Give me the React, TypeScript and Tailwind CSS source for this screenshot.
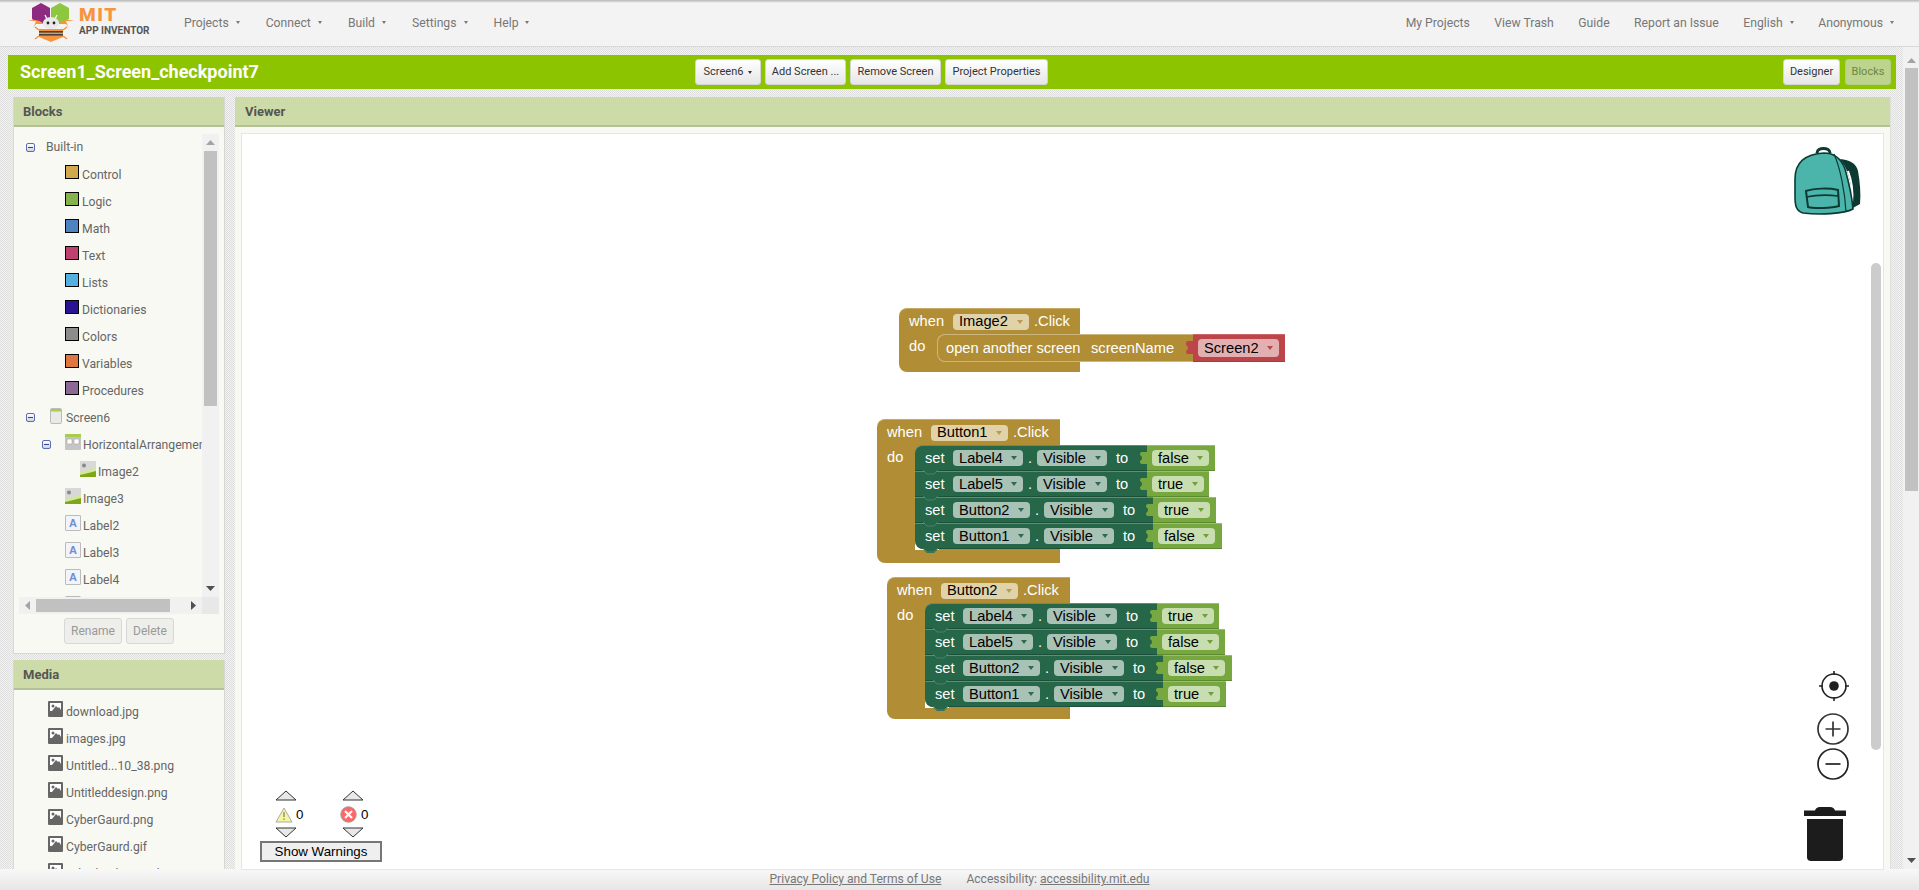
import React from "react";

const roboto = "font-['Roboto',sans-serif]";
const arial = "font-['Liberation_Sans',Arial,sans-serif]";

function Caret({ className = "border-t-[#777]" }: { className?: string }) {
  return <span className={`inline-block w-0 h-0 border-x-[2.5px] border-x-transparent border-t-[3px] ${className}`} />;
}

function NavItem({ label, caret }: { label: string; caret?: boolean }) {
  return (
    <div className="flex items-center text-[12.2px] text-[#777]">
      <span>{label}</span>
      {caret && <span className="ml-[7px] flex"><Caret /></span>}
    </div>
  );
}

function Logo() {
  return (
    <div className="flex items-start w-[150px] h-[46px] ml-[28px] shrink-0">
      <svg width="48" height="40" viewBox="0 0 48 40" className="mt-[2px] shrink-0">
        <polygon points="13,1 22,6 22,17 13,22 4,17 4,6" fill="#8e2a7f" />
        <polygon points="32,1 41,6 41,17 32,22 23,17 23,6" fill="#8dc63f" />
        <path d="M0 19 C6 17 12 18 16 22 L8 22 Q6 24 5 27 L8 19Z" fill="#f7943e" />
        <path d="M46 19 C40 17 34 18 30 22 L38 22 Q40 24 41 27 L38 19Z" fill="#f7943e" />
        <path d="M17 13 L19 17 M29 13 L27 17" stroke="#fff" strokeWidth="1.3" />
        <ellipse cx="23" cy="21" rx="8" ry="6" fill="#e9e9e9" />
        <circle cx="20" cy="21" r="1.4" fill="#222" />
        <circle cx="26" cy="21" r="1.4" fill="#222" />
        <polygon points="23,40 11,35 11,27 35,27 35,35" fill="#f7943e" />
        <rect x="11" y="29" width="24" height="1.6" fill="#444" />
        <rect x="11" y="32" width="24" height="1.6" fill="#444" />
        <path d="M11 28 L7 25 M35 28 L39 25 M11 34 L7 37 M35 34 L39 37" stroke="#f7943e" strokeWidth="1.4" />
      </svg>
      <div className="ml-[3px] flex flex-col">
        <span className="mt-[5px] h-[20px] text-[19px] leading-[20px] font-black tracking-[1.6px] text-[#f7943e]">MIT</span>
        <span className="text-[10px] leading-[12px] font-bold text-[#555] whitespace-nowrap">APP INVENTOR</span>
      </div>
    </div>
  );
}

function Header() {
  return (
    <header className={`h-[47px] shrink-0 bg-[#f3f3f3] border-b border-[#d8d8d8] flex items-center ${roboto} relative`}>
      <div className="absolute top-0 inset-x-0 h-[3px] bg-gradient-to-b from-[#b5b5b5] to-[#f3f3f3]" />
      <Logo />
      <div className="flex items-center ml-[6px] gap-[26px]">
        <NavItem label="Projects" caret />
        <NavItem label="Connect" caret />
        <NavItem label="Build" caret />
        <NavItem label="Settings" caret />
        <NavItem label="Help" caret />
      </div>
      <div className="ml-auto flex items-center gap-[24.5px] pr-[25px]">
        <NavItem label="My Projects" />
        <NavItem label="View Trash" />
        <NavItem label="Guide" />
        <NavItem label="Report an Issue" />
        <NavItem label="English" caret />
        <NavItem label="Anonymous" caret />
      </div>
    </header>
  );
}

function ToolButton({ children, className = "" }: { children: React.ReactNode; className?: string }) {
  return (
    <div className={`h-[26px] flex items-center justify-center rounded-[3px] bg-gradient-to-b from-white to-[#e6e6e6] border border-[#d4d4d4] text-[11px] text-[#333] ${className}`}>
      {children}
    </div>
  );
}

function GreenBar() {
  return (
    <div className={`h-[34px] ml-px shrink-0 bg-[#8dc400] flex items-center pl-[12px] pr-[5px] ${roboto}`}>
      <div className="w-[675px] -mt-px text-[18px] font-bold text-white">Screen1_Screen_checkpoint7</div>
      <div className="flex gap-[4px]">
        <ToolButton className="w-[66px] gap-[5px]">Screen6 <Caret className="border-t-[#333]" /></ToolButton>
        <ToolButton className="w-[81px]">Add Screen ...</ToolButton>
        <ToolButton className="w-[91px]">Remove Screen</ToolButton>
        <ToolButton className="w-[103px]">Project Properties</ToolButton>
      </div>
      <div className="ml-auto flex gap-[5px]">
        <ToolButton className="w-[57px]">Designer</ToolButton>
        <div className="h-[26px] w-[46px] flex items-center justify-center rounded-[3px] bg-[#bdd48e] border border-[#b4cc85] text-[11px] text-[#6c8740]">Blocks</div>
      </div>
    </div>
  );
}

function PanelHeader({ title, pad = "px-[10px]" }: { title: string; pad?: string }) {
  return (
    <div className={`h-[30px] shrink-0 bg-[#cddba8] border-b-2 border-[#b4c096] flex items-center pt-[2px] text-[13px] font-bold text-[#555] ${pad}`}>
      {title}
    </div>
  );
}

function Toggle() {
  return (
    <span className="w-[9px] h-[9px] shrink-0 rounded-[2px] border border-[#5b6eb0] bg-gradient-to-b from-white to-[#cfd3de] flex items-center justify-center">
      <span className="w-[5px] h-px bg-[#33408a]" />
    </span>
  );
}

function Swatch({ className }: { className: string }) {
  return <span className={`w-[14px] h-[14px] -mt-[6px] shrink-0 border border-black ${className}`} />;
}

function FormIcon() {
  return (
    <svg width="12" height="16" viewBox="0 0 12 16" className="-mt-[4px] shrink-0">
      <rect x="0.5" y="0.5" width="11" height="15" rx="1" fill="#e9e9e9" stroke="#bbb" />
      <rect x="1" y="1" width="10" height="2.5" fill="#a9cc4e" />
    </svg>
  );
}

function ArrangeIcon() {
  return (
    <svg width="16" height="16" viewBox="0 0 16 16" className="-mt-[5px] shrink-0">
      <rect width="16" height="16" rx="1" fill="#c5c5c5" />
      <rect width="16" height="3" fill="#a9cc4e" />
      <rect x="2" y="5" width="5" height="5" rx="1" fill="#fff" stroke="#999" strokeWidth="0.5" />
      <rect x="9" y="5" width="5" height="5" rx="1" fill="#fff" stroke="#999" strokeWidth="0.5" />
    </svg>
  );
}

function ImageIcon() {
  return (
    <svg width="16" height="16" viewBox="0 0 16 16" className="-mt-[5px] shrink-0">
      <rect width="16" height="16" fill="#d8d8d8" />
      <circle cx="4" cy="4.5" r="2" fill="#888" />
      <path d="M0 16 V11 C5 10 10 8 16 6 V16Z" fill="#d4e6a0" />
      <path d="M0 16 V14 C6 12.5 11 11.5 16 10 V16Z" fill="#7fa616" />
    </svg>
  );
}

function LabelIcon() {
  return (
    <span className={`w-[16px] h-[16px] -mt-[5px] shrink-0 rounded-[1px] border border-[#bbb] bg-[#f2f4fa] flex items-center justify-center text-[11px] leading-none font-bold text-[#6f8fd0] ${arial}`}>
      A
    </span>
  );
}

function TreeRow({ pad, toggle, icon, label, gap = "ml-[2px] relative top-px" }: { pad: string; toggle?: boolean; icon?: React.ReactNode; label?: string; gap?: string }) {
  return (
    <div className={`h-[27px] flex items-center whitespace-nowrap ${pad}`}>
      {toggle && <Toggle />}
      {icon}
      {label && <span className={`text-[12.2px] text-[#666] ${gap}`}>{label}</span>}
    </div>
  );
}

function ScrollArrow({ dir, className = "" }: { dir: "up" | "down" | "left" | "right"; className?: string }) {
  const paths = { up: "M0 5 L4.5 0 L9 5Z", down: "M0 0 L4.5 5 L9 0Z", left: "M5 0 L0 4.5 L5 9Z", right: "M0 0 L5 4.5 L0 9Z" };
  const horizontal = dir === "left" || dir === "right";
  return (
    <svg width={horizontal ? 5 : 9} height={horizontal ? 9 : 5} viewBox={horizontal ? "0 0 5 9" : "0 0 9 5"} className={className}>
      <path d={paths[dir]} fill={dir === "up" || dir === "left" ? "#a3a3a3" : "#505050"} />
    </svg>
  );
}

function BlocksPanel() {
  const swatchGap = "ml-[3px] relative top-px";
  return (
    <section className="h-[557px] shrink-0 bg-[#f8f9f3] border-x border-b border-[#d8d8d2] flex flex-col">
      <PanelHeader title="Blocks" pad="px-[9px]" />
      <div className="mx-[5px] mt-[7px] h-[480px] flex flex-col">
        <div className="h-[463px] flex">
          <div className="w-[183px] overflow-hidden">
            <TreeRow pad="pl-[7px]" toggle label="Built-in" gap="ml-[11px]" />
            <TreeRow pad="pl-[46px]" icon={<Swatch className="bg-[#cfa94b]" />} label="Control" gap={swatchGap} />
            <TreeRow pad="pl-[46px]" icon={<Swatch className="bg-[#86b14c]" />} label="Logic" gap={swatchGap} />
            <TreeRow pad="pl-[46px]" icon={<Swatch className="bg-[#4f83c0]" />} label="Math" gap={swatchGap} />
            <TreeRow pad="pl-[46px]" icon={<Swatch className="bg-[#c0406f]" />} label="Text" gap={swatchGap} />
            <TreeRow pad="pl-[46px]" icon={<Swatch className="bg-[#52b2dd]" />} label="Lists" gap={swatchGap} />
            <TreeRow pad="pl-[46px]" icon={<Swatch className="bg-[#2a1294]" />} label="Dictionaries" gap={swatchGap} />
            <TreeRow pad="pl-[46px]" icon={<Swatch className="bg-[#8c8c8c]" />} label="Colors" gap={swatchGap} />
            <TreeRow pad="pl-[46px]" icon={<Swatch className="bg-[#dd7640]" />} label="Variables" gap={swatchGap} />
            <TreeRow pad="pl-[46px]" icon={<Swatch className="bg-[#8b6896]" />} label="Procedures" gap={swatchGap} />
            <TreeRow pad="pl-[7px]" toggle icon={<span className="ml-[15px] flex"><FormIcon /></span>} label="Screen6" gap="ml-[4px] relative top-px" />
            <TreeRow pad="pl-[23px]" toggle icon={<span className="ml-[14px] flex"><ArrangeIcon /></span>} label="HorizontalArrangement1" />
            <TreeRow pad="pl-[61px]" icon={<ImageIcon />} label="Image2" />
            <TreeRow pad="pl-[46px]" icon={<ImageIcon />} label="Image3" />
            <TreeRow pad="pl-[46px]" icon={<LabelIcon />} label="Label2" />
            <TreeRow pad="pl-[46px]" icon={<LabelIcon />} label="Label3" />
            <TreeRow pad="pl-[46px]" icon={<LabelIcon />} label="Label4" />
            <TreeRow pad="pl-[46px]" icon={<LabelIcon />} />
          </div>
          <div className="w-[17px] bg-[#f1f1f1] flex flex-col items-center pt-[6px]">
            <ScrollArrow dir="up" />
            <div className="mt-[6px] w-[13px] h-[255px] bg-[#c1c1c1]" />
            <ScrollArrow dir="down" className="mt-auto mb-[6px]" />
          </div>
        </div>
        <div className="h-[17px] flex">
          <div className="w-[183px] bg-[#f1f1f1] flex items-center pl-[6px]">
            <ScrollArrow dir="left" />
            <div className="ml-[6px] w-[134px] h-[13px] bg-[#c1c1c1]" />
            <ScrollArrow dir="right" className="ml-auto mr-[6px]" />
          </div>
          <div className="w-[17px] bg-[#e8e8e8]" />
        </div>
      </div>
      <div className="mt-[4px] ml-[50px] flex gap-[4px]">
        <div className="w-[58px] h-[26px] flex items-center justify-center rounded-[3px] bg-[#eeeeea] border border-[#d8d8d8] text-[12px] text-[#999]">Rename</div>
        <div className="w-[48px] h-[26px] flex items-center justify-center rounded-[3px] bg-[#eeeeea] border border-[#d8d8d8] text-[12px] text-[#999]">Delete</div>
      </div>
    </section>
  );
}

function MediaIcon() {
  return (
    <svg width="15" height="16" viewBox="0 0 15 16" className="-mt-[6px] shrink-0">
      <rect width="15" height="16" rx="1" fill="#666" />
      <rect x="2" y="2" width="11" height="8" fill="#fff" />
      <circle cx="5" cy="5" r="1.5" fill="#666" />
      <path d="M4 10 L8 5 L10 7 L11 6 L13 9 V10Z" fill="#666" />
    </svg>
  );
}

function MediaPanel() {
  const files = ["download.jpg", "images.jpg", "Untitled...10_38.png", "Untitleddesign.png", "CyberGaurd.png", "CyberGaurd.gif", "cyberbackground.jpg"];
  return (
    <section className="mt-[6px] flex-1 min-h-0 bg-[#f8f9f3] border-x border-[#d8d8d2] flex flex-col overflow-hidden">
      <PanelHeader title="Media" pad="px-[9px]" />
      <div className="pt-[8px]">
        {files.map((f) => (
          <div key={f} className="h-[27px] flex items-center pl-[34px] whitespace-nowrap">
            <MediaIcon />
            <span className="ml-[3px] relative top-px text-[12.2px] text-[#666]">{f}</span>
          </div>
        ))}
      </div>
    </section>
  );
}

/* ---------- Blockly blocks ---------- */

function Pill({ label, className, w, arrow }: { label: string; className: string; w: string; arrow: string }) {
  return (
    <div className={`h-[16px] rounded-[4px] flex items-center justify-between pl-[6px] pr-[6px] text-[14.67px] text-black shrink-0 ${w} ${className}`}>
      <span className="leading-none">{label}</span>
      <span className={`w-0 h-0 border-x-[3px] border-x-transparent border-t-[4px] ${arrow}`} />
    </div>
  );
}

function SetRow({ comp, value, dark, light, back }: { comp: string; value: string; dark: string; light: string; back?: string }) {
  const wide = comp.startsWith("Button");
  return (
    <div className={`flex h-[26px] w-fit ${back ?? ""}`}>
      <div className={`relative flex items-center pl-[10px] h-full bg-[#266649] border-t border-[#5d8e78] border-b border-b-[#1d5039] text-white ${dark}`}>
        <span className="w-[28px]">set</span>
        <Pill label={comp} w={wide ? "w-[77px]" : "w-[70px]"} className="bg-[#a8c2b6]" arrow="border-t-[#2f6a50]" />
        <span className="w-[14px] text-center">.</span>
        <Pill label="Visible" w="w-[70px]" className="bg-[#a8c2b6]" arrow="border-t-[#2f6a50]" />
        <span className="ml-[9px]">to</span>
        <svg width="8" height="26" viewBox="0 0 8 26" className="absolute -top-px right-0">
          <path d="M8 7 H3 Q1 7 1 9 V10 Q3 11 3 13 Q3 15 1 16 V17 Q1 19 3 19 H8Z" fill="#76a83f" />
        </svg>
        <svg width="16" height="5" viewBox="0 0 16 5" className="absolute left-[8px] -bottom-[5px] z-10">
          <path d="M0 0 L4 4 H11 L15 0Z" fill="#266649" />
          <path d="M0 0 L4 4 H11 L15 0" fill="none" stroke="#5d8e78" strokeWidth="0.7" />
        </svg>
      </div>
      <div className={`h-full flex items-center pl-[5px] bg-[#76a83f] border-t border-[#98bf6c] border-b border-b-[#5e8a30] ${light}`}>
        <Pill label={value} w={value === "false" ? "w-[57px]" : "w-[52px]"} className="bg-[#c8deb0]" arrow="border-t-[#6f9f3a]" />
      </div>
    </div>
  );
}

function HatHead({ comp, w, headW }: { comp: string; w: string; headW: string }) {
  return (
    <div className={`h-[26px] rounded-tl-[8px] bg-[#b18e35] border-t border-[#c5a964] flex items-center pl-[10px] text-white ${headW}`}>
      <span className="w-[44px]">when</span>
      <Pill label={comp} w={w} className="bg-[#e0d2a9]" arrow="border-t-[#b99b4f]" />
      <span className="ml-[5px]">.Click</span>
    </div>
  );
}

type Row = { comp: string; value: string; dark: string; light: string; back?: string };

function EventBlock({ comp, rows, position, last }: { comp: string; rows: Row[]; position: string; last: string }) {
  return (
    <div className={`absolute ${position} ${arial} text-[14.67px] leading-none flex flex-col`}>
      <HatHead comp={comp} w="w-[77px]" headW="w-[183px]" />
      <div className="flex">
        <div className="w-[38px] bg-[#b18e35] pl-[10px] pt-[5px] text-white">do</div>
        <div className="flex flex-col">
          {rows.map((r) => (
            <SetRow key={r.comp} {...r} />
          ))}
        </div>
      </div>
      <div className={`w-[183px] rounded-bl-[8px] bg-[#b18e35] relative ${last}`}>
        <div className="absolute left-[38px] top-0 h-px w-[24px] bg-white" />
        <svg width="16" height="5" viewBox="0 0 16 5" className="absolute left-[46px] top-0">
          <path d="M0 0 L4 4 H11 L15 0Z" fill="#266649" />
        </svg>
      </div>
    </div>
  );
}

function OpenScreenBlock() {
  return (
    <div className={`absolute left-[657px] top-[174px] ${arial} text-[14.67px] leading-none flex flex-col`}>
      <HatHead comp="Image2" w="w-[76px]" headW="w-[181px]" />
      <div className="flex bg-[#b18e35]">
        <div className="w-[38px] h-[28px] pl-[10px] pt-[5px] text-white">do</div>
        <div className="relative w-[256px] h-[28px] rounded-l-[8px] bg-[#b18e35] border border-[#cdb67e] border-r-0 flex items-center pl-[8px] text-white">
          <span className="w-[145px]">open another screen</span>
          <span>screenName</span>
          <svg width="8" height="28" viewBox="0 0 8 28" className="absolute -top-px right-0">
            <path d="M8 7 H3 Q1 7 1 9 V11 Q3 12 3 14 Q3 16 1 17 V18 Q1 20 3 20 H8Z" fill="#bb4548" />
          </svg>
        </div>
        <div className="w-[92px] h-[28px] bg-[#bb4548] border-t border-[#cc6669] border-b border-b-[#a83a3d] flex items-center pl-[5px]">
          <Pill label="Screen2" w="w-[81px]" className="bg-[#e3b0b2] h-[18px]" arrow="border-t-[#bb4548]" />
        </div>
      </div>
      <div className="h-[10px] w-[181px] rounded-bl-[8px] bg-[#b18e35]" />
    </div>
  );
}

/* ---------- Workspace controls ---------- */

function Backpack() {
  return (
    <svg width="68" height="68" viewBox="0 0 68 68" className="absolute left-[1552px] top-[13px]">
      <path d="M46 12 C56 13 62 16 64 24 C66 35 67 47 66 57 L57 62 C60 50 57 30 50 18Z" fill="#0c3a33" />
      <path d="M54 24 C58 34 59 46 58 56" stroke="#fff" strokeWidth="2" fill="none" />
      <path d="M23 6 C23 0 36 0 36 6" stroke="#0c3a33" strokeWidth="3" fill="none" />
      <path d="M1 32 C1 15 12 7 30 6 C42 6 48 14 51 22 C55 36 58 50 59 62 C50 67 25 68 9 66 C2 64 1 58 1 50Z" fill="#4cb5ab" stroke="#0c3a33" strokeWidth="1.6" />
      <path d="M40 7 C46 20 51 45 52 65" stroke="#0c3a33" strokeWidth="1.2" fill="none" />
      <path d="M12 44 C20 41 36 41 44 43 L45 59 C38 61 20 62 14 60Z" fill="#4cb5ab" stroke="#0c3a33" strokeWidth="2" />
      <path d="M12 50 C22 48 36 48 44 49" stroke="#0c3a33" strokeWidth="1.6" fill="none" />
    </svg>
  );
}

function Controls() {
  return (
    <>
      <svg width="32" height="32" viewBox="0 0 32 32" className="absolute left-[1576px] top-[536px]">
        <circle cx="16" cy="16" r="12" fill="#fff" stroke="#222" strokeWidth="1.6" />
        <circle cx="16" cy="16" r="4.8" fill="#1f1f1f" />
        <path d="M16 1 V5 M16 27 V31 M1 16 H5 M27 16 H31" stroke="#222" strokeWidth="1.6" />
      </svg>
      <svg width="34" height="34" viewBox="0 0 34 34" className="absolute left-[1574px] top-[578px]">
        <circle cx="17" cy="17" r="15" fill="#fff" stroke="#333" strokeWidth="1.7" />
        <path d="M17 9.5 V24.5 M9.5 17 H24.5" stroke="#333" strokeWidth="1.7" />
      </svg>
      <svg width="34" height="34" viewBox="0 0 34 34" className="absolute left-[1574px] top-[613px]">
        <circle cx="17" cy="17" r="15" fill="#fff" stroke="#222" strokeWidth="1.7" />
        <path d="M9.5 17 H24.5" stroke="#222" strokeWidth="1.7" />
      </svg>
      <svg width="42" height="55" viewBox="0 0 42 55" className="absolute left-[1562px] top-[673px]">
        <path d="M0 3.5 H11 Q12 0 16 0 H26 Q30 0 31 3.5 H42 V9 H0Z" fill="#1c1c1c" />
        <path d="M3 12 H39 V50 Q39 54 35 54 H7 Q3 54 3 50Z" fill="#1c1c1c" />
      </svg>
    </>
  );
}

function Warnings() {
  const up = "M1 10 L11 1 L21 10Z";
  const down = "M1 1 L11 10 L21 1Z";
  return (
    <div className={`absolute left-[18px] top-[656px] w-[122px] ${arial}`}>
      <div className="flex h-[51px] text-[13.33px] text-black">
        <div className="ml-[15px] w-[65px] flex flex-col items-start">
          <svg width="22" height="11" viewBox="0 0 22 11" className="shrink-0">
            <path d={up} fill="#e8e8e8" stroke="#333" strokeWidth="1" />
          </svg>
          <div className="mt-[5px] flex items-center h-[17px]">
            <svg width="18" height="16" viewBox="0 0 18 16">
              <path d="M9 1 L17 15 H1Z" fill="#f6f69a" stroke="#aaa" strokeWidth="1" />
              <path d="M9 5 V10 M9 11.5 V13" stroke="#888" strokeWidth="1.4" />
            </svg>
            <span className="ml-[3px]">0</span>
          </div>
          <svg width="22" height="11" viewBox="0 0 22 11" className="mt-[4px] shrink-0">
            <path d={down} fill="#e8e8e8" stroke="#333" strokeWidth="1" />
          </svg>
        </div>
        <div className="w-[40px] flex flex-col items-start">
          <svg width="22" height="11" viewBox="0 0 22 11" className="ml-[2px] shrink-0">
            <path d={up} fill="#e8e8e8" stroke="#333" strokeWidth="1" />
          </svg>
          <div className="mt-[5px] flex items-center h-[17px]">
            <svg width="17" height="17" viewBox="0 0 17 17">
              <circle cx="8.5" cy="8.5" r="7.7" fill="#f66" stroke="#999" strokeWidth="1" />
              <path d="M5 5 L12 12 M12 5 L5 12" stroke="#fff" strokeWidth="2.2" />
            </svg>
            <span className="ml-[4px]">0</span>
          </div>
          <svg width="22" height="11" viewBox="0 0 22 11" className="ml-[2px] mt-[4px] shrink-0">
            <path d={down} fill="#e8e8e8" stroke="#333" strokeWidth="1" />
          </svg>
        </div>
      </div>
      <div className="h-[21px] border-2 border-[#767676] bg-[#efefef] flex items-center justify-center text-[13.33px] text-black">Show Warnings</div>
    </div>
  );
}

function Viewer() {
  const rows1: Row[] = [
    { comp: "Label4", value: "false", dark: "w-[232px] rounded-tl-[8px]", light: "w-[68px]", back: "bg-[#b18e35]" },
    { comp: "Label5", value: "true", dark: "w-[232px]", light: "w-[62px]" },
    { comp: "Button2", value: "true", dark: "w-[238px]", light: "w-[63px]" },
    { comp: "Button1", value: "false", dark: "w-[238px] rounded-bl-[8px]", light: "w-[69px]" },
  ];
  const rows2: Row[] = [
    { comp: "Label4", value: "true", dark: "w-[232px] rounded-tl-[8px]", light: "w-[62px]", back: "bg-[#b18e35]" },
    { comp: "Label5", value: "false", dark: "w-[232px]", light: "w-[68px]" },
    { comp: "Button2", value: "false", dark: "w-[238px]", light: "w-[69px]" },
    { comp: "Button1", value: "true", dark: "w-[238px] rounded-bl-[8px]", light: "w-[63px]" },
  ];
  return (
    <section className="flex-1 min-w-0 ml-[10px] bg-[#f8f9f3] border-r border-[#e0e0da] flex flex-col">
      <PanelHeader title="Viewer" />
      <div className="flex-1 min-h-0 px-[7px] pt-[7px]">
        <div className="relative h-full bg-white ring-1 ring-[#e6e6e6] overflow-hidden">
          <OpenScreenBlock />
          <EventBlock comp="Button1" rows={rows1} position="left-[635px] top-[285px]" last="h-[14px]" />
          <EventBlock comp="Button2" rows={rows2} position="left-[645px] top-[443px]" last="h-[12px]" />
          <Backpack />
          <Controls />
          <div className="absolute left-[1629px] top-[129px] w-[10px] h-[487px] rounded-full bg-[#cccccc]" />
          <Warnings />
        </div>
      </div>
    </section>
  );
}

function PageScrollbar() {
  return (
    <div className="w-[16px] shrink-0 bg-[#f1f1f1] flex flex-col items-center pt-[11px]">
      <ScrollArrow dir="up" />
      <div className="mt-[5px] w-[13px] h-[423px] bg-[#c1c1c1]" />
      <ScrollArrow dir="down" className="mt-auto mb-[6px]" />
    </div>
  );
}

function Footer() {
  return (
    <footer className={`h-[21px] shrink-0 bg-gradient-to-b from-[#f8f8f8] to-[#e6e6e6] flex items-center justify-center text-[12.1px] text-[#777] ${roboto}`}>
      <span className="underline">Privacy Policy and Terms of Use</span>
      <span className="ml-[25px]">Accessibility: <span className="underline">accessibility.mit.edu</span></span>
    </footer>
  );
}

export default function App() {
  return (
    <div className={`h-[890px] w-full overflow-hidden flex flex-col ${roboto}`}>
      <Header />
      <div className="flex-1 min-h-0 flex">
        <main className="flex-1 min-w-0 px-[7px] pt-[8px] flex flex-col bg-[#ececec] bg-[repeating-conic-gradient(#dedede_0_25%,#f3f3f3_0_50%)] bg-[length:2px_2px]">
          <GreenBar />
          <div className="flex-1 min-h-0 mt-[8px] flex pl-[6px] pr-[5px]">
            <div className="w-[212px] shrink-0 flex flex-col">
              <BlocksPanel />
              <MediaPanel />
            </div>
            <Viewer />
          </div>
        </main>
        <PageScrollbar />
      </div>
      <Footer />
    </div>
  );
}
